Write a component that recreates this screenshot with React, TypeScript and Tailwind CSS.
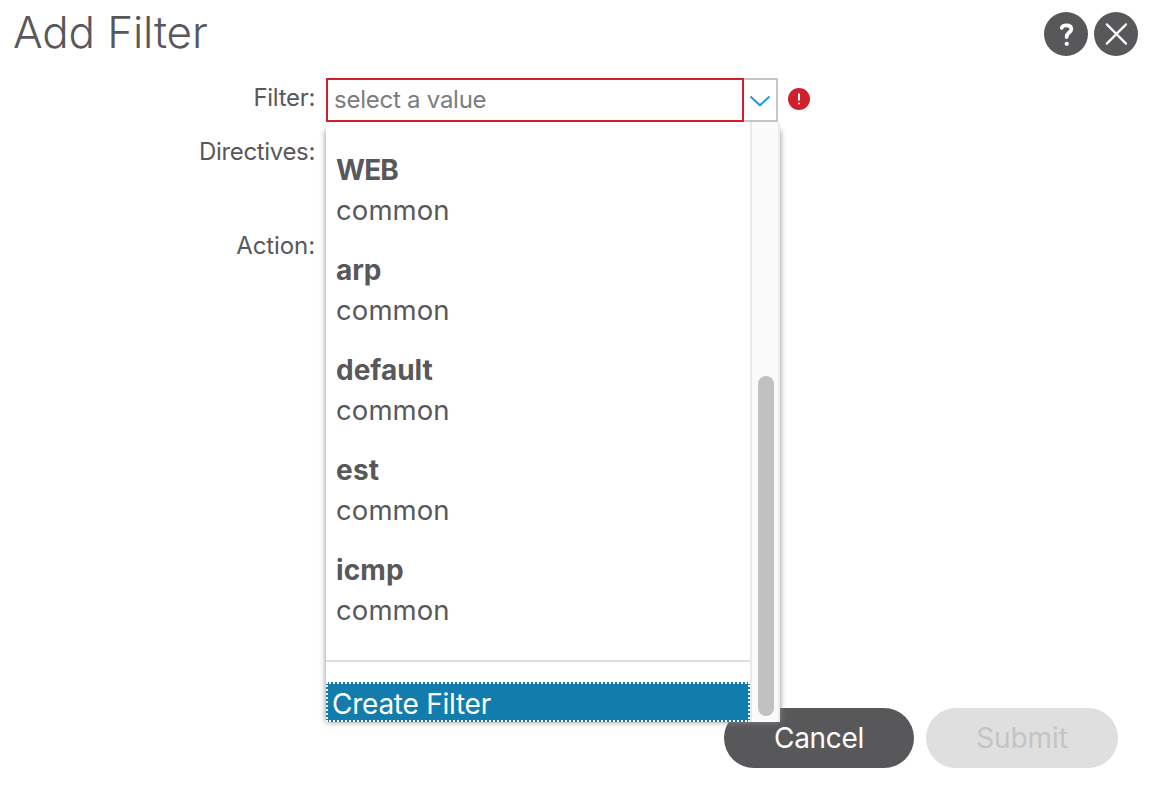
import React from "react";

const filters = [
  { name: "WEB", spacing: "tracking-[-0.9px]" },
  { name: "arp", spacing: "tracking-[0px]" },
  { name: "default", spacing: "tracking-[0px]" },
  { name: "est", spacing: "tracking-[0.2px]" },
  { name: "icmp", spacing: "tracking-[0.1px]" },
];

function FieldLabel({ children, className }: { children: React.ReactNode; className: string }) {
  return (
    <div className={`w-[315px] text-right text-[24px] leading-[32px] whitespace-nowrap ${className}`}>
      {children}
    </div>
  );
}

function Dropdown() {
  return (
    <div className="absolute top-[44px] left-0 h-[600px] w-[454px]">
      <div className="absolute inset-x-0 top-[8px] bottom-0 shadow-[0_0_6px_#888888]" />
      <div className="relative flex h-full bg-white">
        <div className="flex w-[424px] flex-col pt-[28px]">
          <ul className="flex flex-col gap-5 pl-[10px]">
            {filters.map(({ name, spacing }) => (
              <li key={name} className="text-[28px] leading-[40px]">
                <div className={`font-bold ${spacing}`}>{name}</div>
                <div className="text-[27.5px] tracking-[0.1px]">common</div>
              </li>
            ))}
          </ul>
          <div className="mt-[30px] h-[2px] bg-[#dfdfdf]" />
          <button className="mt-5 h-[40px] border-2 border-dotted border-white bg-[#127dad] pl-[4px] text-left text-[28px] leading-[40px] tracking-[-0.25px] text-white">
            Create Filter
          </button>
        </div>
        <div className="h-full w-[30px] border-r-2 border-l-2 border-r-[#ededed] border-l-[#e8e8e8] bg-[#fafafa] pt-[254px] pl-[6px]">
          <div className="h-[340px] w-4 rounded-full bg-[#c1c1c1]" />
        </div>
      </div>
    </div>
  );
}

export default function App() {
  return (
    <div className="flex h-[790px] w-[1156px] flex-col overflow-hidden bg-white font-['Inter','Liberation_Sans',sans-serif] text-[#58585b]">
      <header className="flex h-[78px] items-start justify-between pr-[18px] pl-[13px]">
        <h1 className="pt-[4px] text-[44px] leading-[56px] font-light tracking-[-0.15px]">Add Filter</h1>
        <div className="flex gap-[6px] pt-3">
          <button aria-label="Help" className="h-11 w-11 rounded-full bg-[#58585b]">
            <svg width="44" height="44" viewBox="0 0 44 44" fill="none">
              <path d="M17.7 15.9C18.2 14.2 19.8 13.3 22.4 13.3C25.4 13.3 27.3 14.6 27.3 17C27.3 20.8 22.6 20.4 22.6 25" stroke="white" strokeWidth="3.8" strokeLinecap="round" />
              <circle cx="22.7" cy="31.8" r="2.1" fill="white" />
            </svg>
          </button>
          <button aria-label="Close" className="h-11 w-11 rounded-full bg-[#58585b]">
            <svg width="44" height="44" viewBox="0 0 44 44" fill="none">
              <path d="M12.8 12.4L32 31.6M32 12.4L12.8 31.6" stroke="white" strokeWidth="2.2" strokeLinecap="round" />
            </svg>
          </button>
        </div>
      </header>
      <main className="flex h-[630px] items-start">
        <div className="flex flex-col">
          <FieldLabel className="mt-[4px] tracking-[-0.3px]">Filter:</FieldLabel>
          <FieldLabel className="mt-[22px] tracking-[-0.35px]">Directives:</FieldLabel>
          <FieldLabel className="mt-[62px] tracking-[-0.1px]">Action:</FieldLabel>
        </div>
        <div className="relative ml-[11px] flex h-[44px] items-center">
          <Dropdown />
          <input
            className="relative h-[44px] w-[418px] border-2 border-[#cf2030] bg-white px-[6px] pb-[2px] text-[24px] tracking-[-0.25px] placeholder:text-[#7c7c7e] placeholder:opacity-100"
            placeholder="select a value"
          />
          <button aria-label="Open list" className="relative h-[44px] w-[34px] border-2 border-l-0 border-[#c5c6ca] bg-white">
            <svg width="32" height="40" viewBox="0 0 32 40" fill="none">
              <path d="M6.5 16.5L16 25.3L25.5 16.5" stroke="#1c9fd9" strokeWidth="2" />
            </svg>
          </button>
          <svg className="mb-[2px] ml-[10px]" width="22" height="22" viewBox="0 0 22 22">
            <circle cx="11" cy="11" r="11" fill="#cf2030" />
            <path d="M10 5.5H12V12.5H10ZM10 14.8H12V16.3H10Z" fill="white" />
          </svg>
        </div>
      </main>
      <footer className="flex justify-end gap-3 pr-[38px]">
        <button className="h-[60px] w-[190px] rounded-full bg-[#58585b] text-[28px] tracking-[-0.3px] text-white">Cancel</button>
        <button disabled className="h-[60px] w-[192px] rounded-full bg-[#dfdfdf] text-[28px] tracking-[-0.1px] text-[#c4c4c6]">Submit</button>
      </footer>
    </div>
  );
}
